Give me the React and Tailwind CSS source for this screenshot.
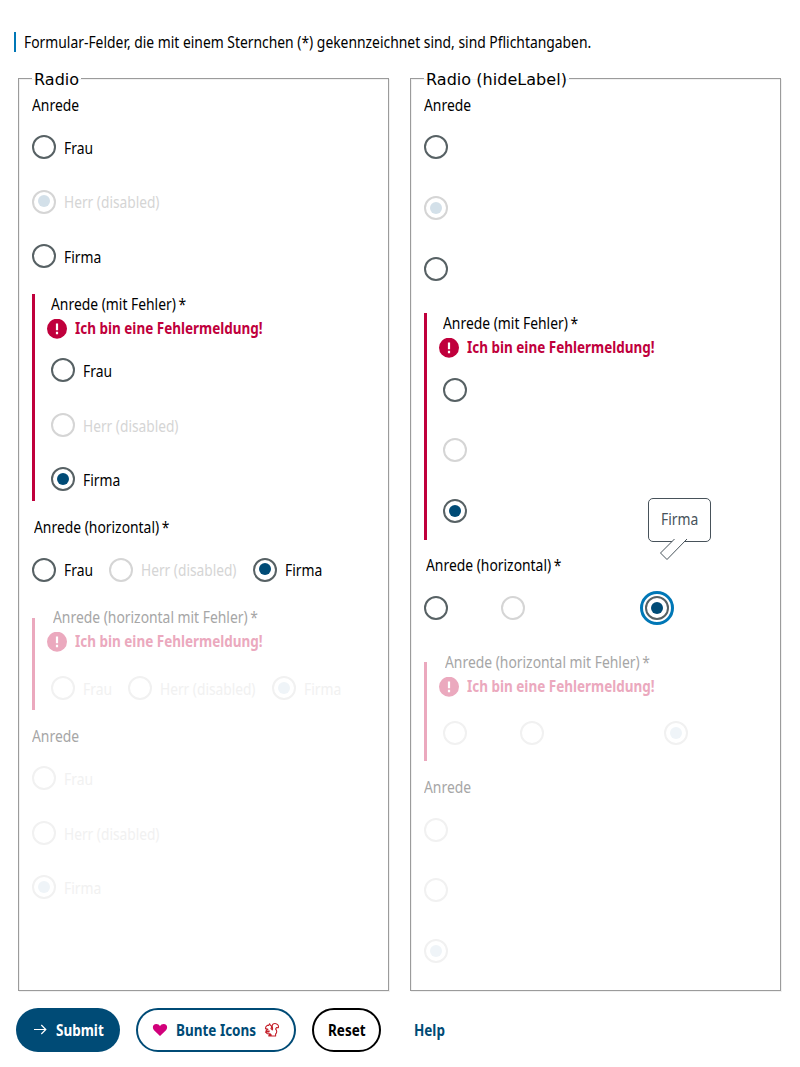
const tones = {
  normal: { ring: "border-[#576164]", dot: "bg-[#004b76]", text: "text-black" },
  muted: { ring: "border-[#d5d5d5]", dot: "bg-[#d3e0e9]", text: "text-[#d5d5d5]" },
  faint: { ring: "border-[#f1f1f1]", dot: "bg-[#eff4f8]", text: "text-[#f1f1f1]" },
};

function Text({ children, className = "", scale = "scale-x-[0.867]" }) {
  return (
    <span className={`block w-max origin-left whitespace-nowrap leading-5 ${scale} ${className}`}>
      {children}
    </span>
  );
}

function Bold({ children, className = "" }) {
  return (
    <span className={`block w-max origin-left scale-x-[0.843] whitespace-nowrap font-bold leading-5 ${className}`}>
      {children}
    </span>
  );
}

function Radio({ label, tone = "normal", checked, high, focus, className = "", textClass = "mt-[3px]" }) {
  const t = tones[tone];
  return (
    <label className={`flex h-6 items-start gap-2 ${className}`}>
      <span
        className={`flex size-6 shrink-0 items-center justify-center rounded-full border-2 ${t.ring} ${
          focus ? "outline-3 outline-offset-2 outline-[#0077b6]" : ""
        }`}
      >
        {checked && <span className={`size-3 rounded-full ${t.dot} ${high ? "mb-0.5" : ""}`} />}
      </span>
      {label && (
        <Text scale={label.length > 6 ? "scale-x-[0.858]" : "scale-x-[0.867]"} className={`${t.text} ${textClass}`}>
          {label}
        </Text>
      )}
    </label>
  );
}

function Legend({ children, required, className = "" }) {
  return (
    <Text className={className}>
      {children}
      {required && <span className="ml-[3px]">*</span>}
    </Text>
  );
}

function ErrorMessage({ faded }) {
  return (
    <div className={`mt-1 -ml-1 flex h-5 gap-2 ${faded ? "text-[#eba9be]" : "text-[#c0003c]"}`}>
      <svg viewBox="0 0 20 20" className="mt-px size-5 shrink-0">
        <circle cx="10" cy="9.7" r="10" fill="currentColor" />
        <path d="M10 4.500v6.700M10 12.700v2.500" stroke="white" strokeWidth="2.200" />
      </svg>
      <Bold>Ich bin eine Fehlermeldung!</Bold>
    </div>
  );
}

function Panel({ title, children }) {
  return (
    <fieldset className="h-[922px] w-[371px] border border-[#9b9b9b] px-[13px] shadow-[inset_1px_1px_0_#f1f1f1,1px_1px_0_#f1f1f1]">
      <legend className="h-[19px] px-0.5 font-['DejaVu_Sans'] text-base leading-[22px] tracking-[0.04px] whitespace-nowrap">
        {title}
      </legend>
      {children}
    </fieldset>
  );
}

function Tooltip() {
  return (
    <div className="absolute top-[-98px] left-[3px] h-[62px] w-[63px]">
      <div className="flex h-11 items-start rounded-[5px] border border-[#47525a] bg-white pt-2.5 pl-[11.5px] text-[#47525a]">
        <Text>Firma</Text>
      </div>
      <svg viewBox="0 0 63 62" className="absolute inset-0 h-[62px] w-[63px]">
        <path d="M26.5 41 12.5 55 19 61.5 39 41" fill="white" stroke="#47525a" />
      </svg>
    </div>
  );
}

function Heart() {
  return (
    <svg viewBox="0 0 16 16" className="size-4" fill="#d2007b">
      <path d="M8 14 2 8.200C-.2 5.800.9 2 4.300 2 6 2 7.300 2.800 8 4.200 8.700 2.800 10 2 11.700 2c3.400 0 4.500 3.800 2.300 6.200z" />
    </svg>
  );
}

function Squirrel() {
  return (
    <svg viewBox="0 0 16 16" className="size-4" fill="none" stroke="#c4202a" strokeWidth="1.100" strokeLinejoin="round">
      <path d="M3.500 3.200 4.600 3.500 5.600 1.800 6.400 3.300C7.800 3.800 8 5.500 7 6.500L8.300 7.800C9.300 6.800 8 5.300 8.200 3.600 8.600 1.800 10.500 1.300 12 1.700 14 2.200 15 4 14.300 5.800L12.500 5.600 11.600 7C13.200 8.600 13 11 11.600 12V14H4.800L5 12.900H7.200L6.200 11.800 3.200 11.600 1.500 10.200 2 9.600 4.800 10 5.300 9 3 9 2 8 4 7.300 1.500 6.500 1.800 4.800Z" />
    </svg>
  );
}

export default function App() {
  return (
    <main className="h-[1067px] w-[800px] overflow-hidden bg-white pt-8 font-['Noto_Sans',sans-serif] text-base text-black">
      <div className="ml-3.5 h-5 border-l-2 border-[#0077b6] pl-2">
        <Text>Formular-Felder, die mit einem Sternchen (*) gekennzeichnet sind, sind Pflichtangaben.</Text>
      </div>

      <div className="mt-[17px] ml-[18px] flex gap-[21px]">
        <Panel title="Radio">
          <Legend className="mt-[7px]">Anrede</Legend>
          <Radio label="Frau" className="mt-5" />
          <Radio label="Herr (disabled)" tone="muted" checked high className="mt-[31px]" textClass="mt-0.5" />
          <Radio label="Firma" className="mt-[30px]" />

          <div className="mt-[26px] flex h-[207px] flex-col border-l-3 border-[#c0003c] pl-4">
            <Legend required>Anrede (mit Fehler)</Legend>
            <ErrorMessage />
            <Radio label="Frau" className="mt-5" />
            <Radio label="Herr (disabled)" tone="muted" className="mt-[31px]" />
            <Radio label="Firma" checked className="mt-[30px]" />
          </div>

          <Legend required className="mt-4 ml-0.5">Anrede (horizontal)</Legend>
          <div className="mt-[21px] grid grid-cols-[77px_144px_1fr]">
            <Radio label="Frau" textClass="mt-0.5" />
            <Radio label="Herr (disabled)" tone="muted" textClass="mt-0.5" />
            <Radio label="Firma" checked high textClass="mt-0.5" />
          </div>

          <div className="mt-9 flex h-[92px] flex-col border-l-3 border-[#eba9be] pl-4">
            <Legend required className="-mt-[11px] ml-0.5 text-[#a6a6a6]">Anrede (horizontal mit Fehler)</Legend>
            <ErrorMessage faded />
            <div className="mt-[25px] grid grid-cols-[77px_144px_1fr]">
              <Radio label="Frau" tone="faint" />
              <Radio label="Herr (disabled)" tone="faint" />
              <Radio label="Firma" tone="faint" checked />
            </div>
          </div>

          <Legend className="mt-4 text-[#a6a6a6]">Anrede</Legend>
          <Radio label="Frau" tone="faint" className="mt-5" />
          <Radio label="Herr (disabled)" tone="faint" className="mt-[31px]" />
          <Radio label="Firma" tone="faint" checked className="mt-[30px]" />
        </Panel>

        <Panel title="Radio (hideLabel)">
          <Legend className="mt-[7px]">Anrede</Legend>
          <Radio className="mt-5" />
          <Radio tone="muted" checked className="mt-[37px]" />
          <Radio className="mt-[37px]" />

          <div className="mt-8 flex h-[227px] flex-col border-l-3 border-[#c0003c] pl-4">
            <Legend required>Anrede (mit Fehler)</Legend>
            <ErrorMessage />
            <Radio className="mt-[21px]" />
            <Radio tone="muted" className="mt-9" />
            <Radio checked className="mt-[37px]" />
          </div>

          <Legend required className="mt-[15px] ml-0.5">Anrede (horizontal)</Legend>
          <div className="mt-[21px] grid grid-cols-[77px_144px_1fr]">
            <Radio />
            <Radio tone="muted" />
            <div className="relative">
              <Radio checked focus />
              <Tooltip />
            </div>
          </div>

          <div className="mt-[42px] flex h-[99px] flex-col border-l-3 border-[#eba9be] pl-4">
            <Legend required className="-mt-2.5 ml-0.5 text-[#a6a6a6]">Anrede (horizontal mit Fehler)</Legend>
            <ErrorMessage faded />
            <div className="mt-[25px] grid grid-cols-[77px_144px_1fr]">
              <Radio tone="faint" />
              <Radio tone="faint" />
              <Radio tone="faint" checked />
            </div>
          </div>

          <Legend className="mt-4 text-[#a6a6a6]">Anrede</Legend>
          <Radio tone="faint" className="mt-[21px]" />
          <Radio tone="faint" className="mt-9" />
          <Radio tone="faint" checked className="mt-[37px]" />
        </Panel>
      </div>

      <div className="mt-[17px] ml-4 flex h-11 gap-4">
        <button className="flex w-[104px] items-center rounded-full bg-[#004b76] pl-4 text-white">
          <svg viewBox="0 0 16 16" className="mr-2 size-4" fill="none" stroke="white" strokeWidth="1.200">
            <path d="M2 7.500H13.700M9.300 3 13.800 7.500 9.300 12" />
          </svg>
          <Bold>Submit</Bold>
        </button>
        <button className="flex w-40 items-center rounded-full border-2 border-[#004b76] pl-3.5 text-[#004b76]">
          <Heart />
          <span className="ml-2 w-[88px]"><Bold>Bunte Icons</Bold></span>
          <Squirrel />
        </button>
        <button className="flex w-[69px] items-center rounded-full border-2 border-black pl-3.5">
          <Bold>Reset</Bold>
        </button>
        <button className="flex w-16 items-center pl-[17px] text-[#004b76]">
          <Bold>Help</Bold>
        </button>
      </div>
    </main>
  );
}
